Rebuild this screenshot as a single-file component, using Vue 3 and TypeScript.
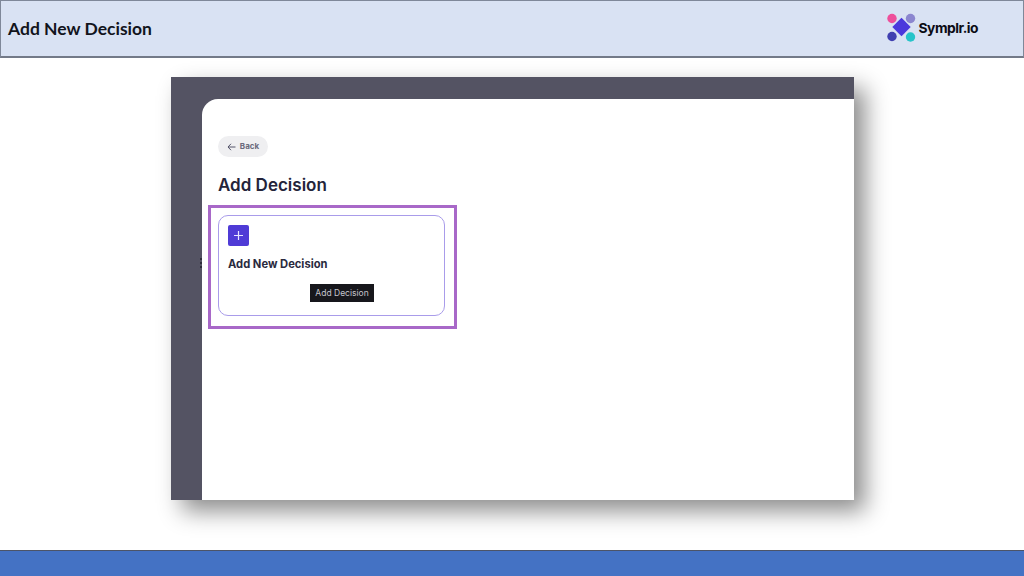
<script setup lang="ts">
const headerTitle: string = 'Add New Decision'
</script>

<template>
  <div class="slide">
    <header class="top">
      <h1>{{ headerTitle }}</h1>
      <div class="brand">
        <svg width="32" height="32" viewBox="0 0 32 32">
          <circle cx="6" cy="6.5" r="4.7" fill="#ee4f9b" />
          <circle cx="24.500" cy="6.500" r="4.700" fill="#8b86cf" />
          <circle cx="6" cy="24.500" r="4.700" fill="#3f3fb0" />
          <circle cx="24.500" cy="25" r="4.700" fill="#27c4c9" />
          <rect x="9" y="8.500" width="13" height="13" fill="#4a38dc" transform="rotate(45 15.500 15)" />
        </svg>
        <span>Symplr.io</span>
      </div>
    </header>

    <main class="stage">
      <div class="shot">
        <section class="panel">
          <span class="grip"></span>
          <button class="back">
            <svg width="9" height="8" viewBox="0 0 9 8"><path d="M4 .8 1 4l3 3.200M1 4h7.500" fill="none" stroke="#55556b" stroke-width="1" /></svg>
            <span class="back-label">Back</span>
          </button>
          <h2>Add Decision</h2>
          <div class="highlight-wrap">
            <article class="card">
              <div class="plus">
                <svg width="11" height="11" viewBox="0 0 11 11"><path d="M5.500 1v9M1 5.500h9" stroke="#e8e6ff" stroke-width="1.200" /></svg>
              </div>
              <h3>Add New Decision</h3>
              <div class="tip">Add Decision</div>
            </article>
            <div class="highlight"></div>
          </div>
        </section>
      </div>
    </main>

    <footer class="bottom"></footer>
  </div>
</template>

<style>
html, body { margin: 0; background: #fff; }
</style>

<style scoped>
.slide {
  width: 1024px;
  height: 576px;
  display: flex;
  flex-direction: column;
  overflow: hidden;
  background: #fff;
}
.top {
  height: 58px;
  box-sizing: border-box;
  flex: none;
  display: flex;
  align-items: center;
  justify-content: space-between;
  background: #d9e2f3;
  border: 1px solid #7f8899;
  border-bottom: 2px solid #737a88;
  padding: 0 45px 0 7px;
}
.top h1 {
  margin: 0;
  font: 700 17.500px "Lato", sans-serif;
  color: #12141c;
}
.brand {
  display: flex;
  align-items: center;
  gap: 1px;
  font: 700 13.800px "Inter", sans-serif;
  letter-spacing: -0.5px;
  color: #0c0c14;
  transform: translateY(-1px);
}
.stage {
  flex: 1;
  display: flex;
  justify-content: center;
  align-items: flex-start;
  padding-top: 19px;
  padding-left: 1px;
}
.shot {
  width: 683px;
  height: 423px;
  box-sizing: border-box;
  padding: 22px 0 0 31px;
  background: #545363;
  box-shadow: 11px 11px 22px rgba(0, 0, 0, 0.45);
}
.panel {
  position: relative;
  height: 100%;
  box-sizing: border-box;
  padding: 37px 0 0 16px;
  background: #fff;
  border-top-left-radius: 16px;
}
.grip {
  position: absolute;
  left: -2px;
  top: 159px;
  width: 2px;
  height: 10px;
  background: repeating-linear-gradient(#2e2e3a 0 2px, transparent 2px 4px);
}
.back {
  width: 50px;
  height: 21px;
  padding: 0;
  border: 0;
  border-radius: 11px;
  background: #efeff1;
  display: flex;
  align-items: center;
  justify-content: center;
  gap: 4px;
  font: 700 8px "Inter", sans-serif;
  color: #6a6a7c;
}
.back-label {
  margin-top: -2px;
}
h2 {
  margin: 18px 0 0;
  font: 600 17px/20px "Inter", sans-serif;
  color: #24243a;
}
.highlight-wrap {
  position: relative;
  width: 227px;
  margin-top: 20px;
}
.card {
  position: relative;
  height: 101px;
  box-sizing: border-box;
  padding: 9px;
  border: 1.500px solid #a99cea;
  border-radius: 10px;
  background: #fff;
}
.plus {
  width: 21px;
  height: 21px;
  border-radius: 2px;
  background: #4f3bd6;
  display: flex;
  align-items: center;
  justify-content: center;
}
h3 {
  margin: 11px 0 0;
  font: 700 11.200px/14px "Inter", sans-serif;
  color: #2a2a3e;
}
.tip {
  position: absolute;
  left: 91px;
  top: 68px;
  width: 64px;
  height: 18px;
  background: #17171c;
  color: #c4c4cc;
  font: 400 8.500px/18px "Inter", sans-serif;
  text-align: center;
}
.highlight {
  position: absolute;
  left: -10px;
  top: -10px;
  width: 249px;
  height: 124px;
  box-sizing: border-box;
  border: 3px solid #a868c8;
  pointer-events: none;
}
.bottom {
  height: 26px;
  flex: none;
  box-sizing: border-box;
  background: #4472c4;
  border-top: 1px solid #4c5468;
}
</style>
